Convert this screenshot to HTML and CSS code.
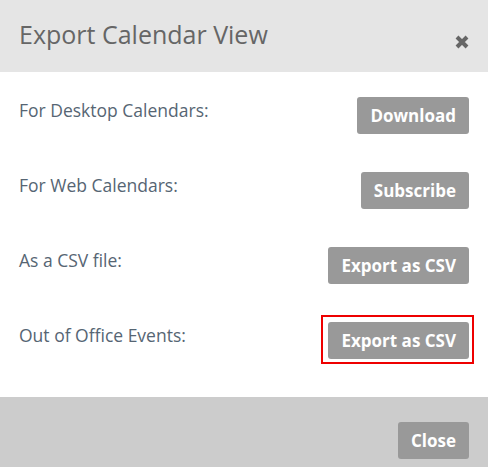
FILE: index.html
```html
<!DOCTYPE html>
<html lang="en">
<head>
    <meta charset="UTF-8">
    <title>Export Calendar View</title>
    <link rel="stylesheet" href="styles.css">
</head>
<body>

<div class="modal">
    <div class="modal-header">
        <h3>Export Calendar View</h3>
        <button class="close-x" type="button" aria-label="Close">
            <svg width="14" height="14" viewBox="0 0 14 14">
                <path d="M2 2 L12 12 M12 2 L2 12" stroke="#666" stroke-width="4" stroke-linecap="butt"/>
            </svg>
        </button>
    </div>

    <div class="modal-body">
        <div class="export-row">
            <span class="label">For Desktop Calendars:</span>
            <button class="btn">Download</button>
        </div>
        <div class="export-row">
            <span class="label">For Web Calendars:</span>
            <button class="btn">Subscribe</button>
        </div>
        <div class="export-row">
            <span class="label">As a CSV file:</span>
            <button class="btn">Export as CSV</button>
        </div>
        <div class="export-row">
            <span class="label">Out of Office Events:</span>
            <button class="btn focused">Export as CSV</button>
        </div>
    </div>

    <div class="modal-footer">
        <button class="btn">Close</button>
    </div>
</div>

</body>
</html>
```

FILE: styles.css
```css
body {
    margin: 0;
    font-family: "Open Sans", Arial, sans-serif;
    background-color: #fff;
}
.modal {
    width: 488px;
}
.modal-header {
    background-color: #e5e5e5;
    height: 72px;
    padding: 0 19px;
    display: flex;
    align-items: center;
    justify-content: space-between;
    box-sizing: border-box;
}
.modal-header h3 {
    margin: 0;
    font-size: 25px;
    font-weight: normal;
    color: #666;
    padding-bottom: 4px;
}
.close-x {
    background: none;
    border: none;
    padding: 0;
    margin-top: 12px;
    width: 14px;
    height: 14px;
    cursor: pointer;
}
.close-x svg {
    display: block;
}
.modal-body {
    padding: 25px 19px 38px;
    display: flex;
    flex-direction: column;
    gap: 38px;
}
.export-row {
    display: flex;
    justify-content: space-between;
    align-items: flex-start;
}
.label {
    font-size: 17.5px;
    color: #566573;
    line-height: 24px;
    padding-top: 1px;
}
.btn {
    background-color: #999;
    color: #fff;
    border: none;
    border-radius: 3px;
    height: 37px;
    padding: 0 13px;
    font-family: "Open Sans", Arial, sans-serif;
    font-size: 17px;
    font-weight: 700;
    cursor: pointer;
}
/* focus ring drawn square, a bit wider on top/left */
.btn.focused {
    position: relative;
}
.btn.focused::after {
    content: "";
    position: absolute;
    left: -7px;
    top: -7px;
    right: -5px;
    bottom: -5px;
    border: 2px solid #e00;
}
.modal-footer {
    background-color: #ccc;
    padding: 25px 19px;
    display: flex;
    justify-content: flex-end;
}
```
